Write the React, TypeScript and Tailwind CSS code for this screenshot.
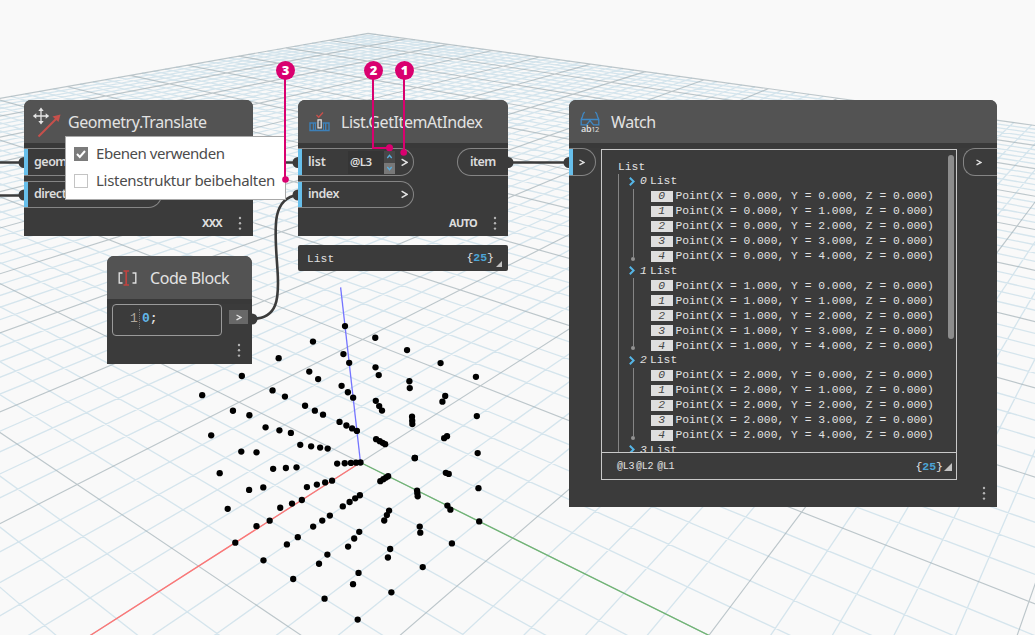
import type { ReactNode } from "react";

/* ---------- 3D background ---------- */

const project = (x: number, y: number, z = 0): [number, number] => {
  const w = 1 - 0.02986 * x - 0.02247 * y - 0.02388 * z;
  return [
    (360.5 - 38.33 * x + 18.91 * y - 12.11 * z) / w,
    (462.5 + 3.83 * x + 3.01 * y - 41.9 * z) / w,
  ];
};

const EXTENT = 50;
const MIN_DEPTH = 0.2;

function linePath(fixed: number, alongX: boolean) {
  const other = alongX ? 0.02247 : 0.02986;
  const own = alongX ? 0.02986 : 0.02247;
  const limit = Math.min(EXTENT, (1 - MIN_DEPTH - other * fixed) / own);
  if (limit <= -EXTENT) return "";
  const [x1, y1] = alongX ? project(-EXTENT, fixed) : project(fixed, -EXTENT);
  const [x2, y2] = alongX ? project(limit, fixed) : project(fixed, limit);
  return `M${x1.toFixed(2)} ${y1.toFixed(2)}L${x2.toFixed(2)} ${y2.toFixed(2)}`;
}

let minor = "";
let major = "";
for (let i = -EXTENT; i <= EXTENT; i++) {
  const d = linePath(i, true) + linePath(i, false);
  if (i % 5 === 0) major += d;
  else minor += d;
}

const range = [0, 1, 2, 3, 4];
const points = range.flatMap((x) => range.flatMap((y) => range.map((z) => project(x, y, z))));

function Scene() {
  const o = project(0, 0);
  const rx = project(16, 0);
  const gy = project(0, 16);
  const bz = project(0, 0, 5);
  return (
    <svg className="absolute inset-0" width="1035" height="635" viewBox="0 0 1035 635" fill="none">
      <path d={minor} stroke="#bcd7e4" strokeOpacity="0.6" strokeWidth="1.300" />
      <path d={major} stroke="#a3b0b7" strokeOpacity="0.7" strokeWidth="1.150" />
      <path d={`M${o}L${rx}`} stroke="#ff7575" strokeWidth="1.3" />
      <path d={`M${o}L${gy}`} stroke="#6fb573" strokeWidth="1.3" />
      <path d={`M${o}L${bz}`} stroke="#7474ff" strokeWidth="1.3" />
      {points.map(([x, y], i) => (
        <circle key={i} cx={x} cy={y} r="3.150" fill="#000" />
      ))}
      <g stroke="#3b3b3b" strokeWidth="2.6">
        <path d="M0 162.500H24M0 195.500H24M252 162.500H298M508 162.500H569" />
        <path d="M253 318.800C277 318.500 279.500 300 277.500 270C275 232 270 198 298 195" />
      </g>
      <g fill="#3b3b3b">
        <path d="M24 157a5.500 5.500 0 0 0 0 11zM24 189.500a5.500 5.500 0 0 0 0 11zM298 157a5.500 5.500 0 0 0 0 11zM298 189.500a5.500 5.500 0 0 0 0 11zM569 157a5.500 5.500 0 0 0 0 11z" />
        <path d="M508 157a5.500 5.500 0 0 1 0 11zM252 313.500a5.500 5.500 0 0 1 0 11z" />
      </g>
    </svg>
  );
}

/* ---------- node parts ---------- */

function Node({ className, title, icon, children }: { className: string; title: ReactNode; icon: ReactNode; children: ReactNode }) {
  return (
    <section className={`absolute flex flex-col overflow-hidden rounded-t-[7px] bg-[#3b3b3b] ${className}`}>
      <header className="flex h-[43px] shrink-0 items-center bg-[#535353] text-[16px] tracking-[-0.420px] text-[#e2e2e2]">
        {icon}
        {title}
      </header>
      <div className="h-[5px] shrink-0 bg-[#393939]" />
      {children}
    </section>
  );
}

function InPort({ className, children }: { className: string; children: ReactNode }) {
  return (
    <div className={`flex items-center rounded-r-[14px] border border-l-0 border-[#858585] text-[12.500px] font-semibold tracking-[-0.500px] text-[#dcdcdc] ${className}`}>
      <i className="mr-[6px] w-[4px] shrink-0 self-stretch bg-[#67bfeb]" />
      {children}
    </div>
  );
}

function Chevron({ className = "" }: { className?: string }) {
  return (
    <svg className={className} width="7" height="9" viewBox="0 0 7 9" fill="none" stroke="#e2e2e2" strokeWidth="1.500">
      <path d="M.6 1.200 6 4.400.6 7.600" />
    </svg>
  );
}

function SmallChevron({ className = "" }: { className?: string }) {
  return (
    <svg className={className} width="6" height="7" viewBox="0 0 6 7" fill="none" stroke="#e2e2e2" strokeWidth="1.400">
      <path d="M.5 1 5 3.400.5 5.800" />
    </svg>
  );
}

function Dots() {
  return (
    <svg width="4" height="15" viewBox="0 0 4 15" fill="#b5b5b5">
      <circle cx="2" cy="2" r="1.200" />
      <circle cx="2" cy="7.300" r="1.200" />
      <circle cx="2" cy="12.600" r="1.200" />
    </svg>
  );
}

function NodeFooter({ children }: { children: ReactNode }) {
  return (
    <div className="flex flex-1 items-center justify-end gap-[16px] pr-[11px] pt-[2px] text-[11px] font-bold tracking-[-0.700px] text-[#dedede]">
      {children}
      <Dots />
    </div>
  );
}

function TranslateIcon() {
  return (
    <svg className="ml-[8px] mr-[6px]" width="30" height="32" viewBox="0 0 30 32" fill="none">
      <path d="M6.500 30.500 25 12" stroke="#c6504b" strokeWidth="2" />
      <path d="M28.500 8.500 26.500 16 20.500 10.500z" fill="#c6504b" />
      <path d="M9 4v12M3 10h12" stroke="#e4e4e4" strokeWidth="1.300" />
      <path d="M9 1.500 11.700 5H6.300zM9 18.500l2.700-3.500H6.300zM.8 10l3.500-2.700v5.400zM17.200 10l-3.500-2.700v5.400z" fill="#e4e4e4" />
    </svg>
  );
}

function ListIcon() {
  return (
    <svg className="ml-[11px] mr-[11px]" width="21" height="21" viewBox="0 0 21 21" fill="none">
      <path d="M1 12h19v7.500H1zM4.500 12v7.500M16.700 12v7.500" stroke="#3d80b8" strokeWidth="1.400" />
      <path d="M6.500 12v7.500M14.500 12v7.500" stroke="#3d80b8" />
      <path d="M7.300 11.200h6.400v6.500H7.300z" fill="#535353" />
      <path d="M9 8.800h3.200v8H9z" stroke="#e4e4e4" strokeWidth="1.200" />
      <path d="M7.500 4 9.700 6.200 14 1.500" stroke="#c6504b" strokeWidth="1.400" />
    </svg>
  );
}

function CodeIcon() {
  return (
    <svg className="ml-[10px] mr-[12px]" width="21" height="18" viewBox="0 0 21 18" fill="none">
      <path d="M5.500 4H2.200v10h3.300M15.500 4h3.300v10h-3.300" stroke="#dedede" strokeWidth="1.400" />
      <path d="M6.500 2H12M6.500 16H12M9.200 2v14" stroke="#c04340" strokeWidth="1.700" />
    </svg>
  );
}

function WatchIcon() {
  return (
    <span className="ml-[11px] mr-[11px] flex w-[20px] flex-col items-center">
      <svg width="20" height="16" viewBox="0 0 20 16" fill="none" stroke="#3f88c5" strokeWidth="1.300">
        <path d="M4.800 1.200C3 2 3 3 2.500 5.500L1.200 8.500v5.300h5.300L10 9.500l3.500 4.300h5.300V8.500l-1.300-3C17 3 17 2 15.200 1.200M1.200 8.500h17.600" />
      </svg>
      <span className="mt-[-2px] flex items-end text-[9px] leading-[8px] font-semibold text-[#dedede]">
        ab<span className="text-[7.500px] leading-[7px] font-normal">12</span>
      </span>
    </span>
  );
}

/* ---------- watch tree ---------- */

const MONO = "font-['Liberation_Mono',monospace]";

function BranchTitle({ index }: { index: number }) {
  return (
    <div className="flex h-[14.500px] items-center">
      <svg className="mr-[5px]" width="6" height="9" viewBox="0 0 6 9" fill="none" stroke="#55b5e6" strokeWidth="2">
        <path d="M.8.800 4.600 4.500.8 8.200" />
      </svg>
      <i className="w-[10px]">{index}</i>
      List
    </div>
  );
}

function Branch({ index }: { index: number }) {
  return (
    <div className="flex h-[89.500px] flex-col">
      <BranchTitle index={index} />
      <div className="flex">
        <div className="ml-[2px] flex w-[4px] flex-col items-center pb-[5px]">
          <i className="w-px flex-1 bg-[#858585]" />
          <i className="mb-[-2px] size-[4px] rounded-full bg-[#929292]" />
        </div>
        <div className="ml-[16px]">
          {range.map((n) => (
            <div key={n} className="flex h-[15px] items-center">
              <i className="mr-[3px] flex h-[11px] w-[21.500px] items-center justify-center bg-[#dedede] text-[#444]">{n}</i>
              <span className="whitespace-pre">{`Point(X = ${index}.000, Y = ${n}.000, Z = 0.000)`}</span>
            </div>
          ))}
        </div>
      </div>
    </div>
  );
}

function Count() {
  return (
    <span className="text-[11.500px]">
      {"{"}
      <b className="font-bold text-[#4ba4d6]">25</b>
      {"}"}
    </span>
  );
}

function Corner({ className = "" }: { className?: string }) {
  return (
    <svg className={className} width="8" height="8" viewBox="0 0 8 8">
      <path d="M8 0v8H0z" fill="#c2c2c2" />
    </svg>
  );
}

/* ---------- callouts ---------- */

function Badge({ className, children }: { className: string; children: ReactNode }) {
  return (
    <span className={`absolute top-[61px] flex size-[19px] items-center justify-center rounded-full bg-[#d9006f] font-['Open_Sans',sans-serif] text-[13px] font-extrabold text-white ${className}`}>
      {children}
    </span>
  );
}

export default function App() {
  return (
    <main className="relative h-[635px] w-[1035px] overflow-hidden bg-[#f9f9f9] font-['Noto_Sans',sans-serif]">
      <Scene />

      <Node className="left-[24px] top-[100px] h-[136px] w-[229px]" title="Geometry.Translate" icon={<TranslateIcon />}>
        <InPort className="h-[28px] w-[138px]">geometry</InPort>
        <InPort className="mt-[5px] h-[27px] w-[138px]">direction</InPort>
        <NodeFooter>XXX</NodeFooter>
      </Node>

      <Node className="left-[298px] top-[100px] h-[136px] w-[210px]" title="List.GetItemAtIndex" icon={<ListIcon />}>
        <div className="flex justify-between">
          <InPort className="h-[28px] w-[116px]">
            <span className="w-[40px] tracking-[-0.200px]">list</span>
            <span className="flex h-[23px] w-[36px] items-center bg-[#353535] pl-[2px] text-[11.500px]">@L3</span>
            <span className="flex h-[23px] w-[11px] flex-col bg-[#484848]">
              <svg width="11" height="12" viewBox="0 0 11 12" fill="none" stroke="#58aede" strokeWidth="1.300">
                <path d="M3.300 7 5.500 4.300 7.700 7" />
              </svg>
              <svg className="bg-[#787878]" width="11" height="11" viewBox="0 0 11 11" fill="none" stroke="#58aede" strokeWidth="1.300">
                <path d="M3.300 4 5.500 6.700 7.700 4" />
              </svg>
            </span>
            <Chevron className="ml-[6px]" />
          </InPort>
          <div className="flex h-[28px] w-[51px] items-center rounded-l-[14px] border border-r-0 border-[#858585] pl-[12px] text-[12.500px] font-semibold tracking-[-0.600px] text-[#dcdcdc]">
            item
          </div>
        </div>
        <InPort className="mt-[5px] h-[27px] w-[116px]">
          <span className="w-[93px]">index</span>
          <Chevron />
        </InPort>
        <NodeFooter>AUTO</NodeFooter>
      </Node>

      <div className={`absolute left-[298px] top-[245px] flex h-[26px] w-[210px] items-center rounded-[2px] bg-[#3b3b3b] pl-[9px] text-[11.330px] text-[#e0e0e0] ${MONO}`}>
        <span className="flex-1 pt-[3px]">List</span>
        <Count />
        <Corner className="ml-[2px] mr-[6px] mt-[11px] size-[6px]" />
      </div>

      <Node className="left-[107px] top-[256px] h-[108px] w-[145px]" title="Code Block" icon={<CodeIcon />}>
        <div className="flex items-start pl-[5px]">
          <div className={`flex h-[32px] w-[110px] items-center rounded-[4px] border border-[#9a9a9a] pb-[3px] pl-[17px] text-[13px] ${MONO}`}>
            <span className="w-[9px] text-[#b0a89e]">1</span>
            <i className="mr-[2px] h-[20px] border-l border-dotted border-[#777]" />
            <b className="text-[#62b8ea]">0</b>
            <b className="text-[#dedede]">;</b>
          </div>
          <div className="ml-[7px] mt-[6px] flex h-[14px] w-[19px] items-center justify-center bg-[#686868]">
            <SmallChevron />
          </div>
        </div>
        <div className="flex flex-1 items-center justify-end pr-[11px]">
          <Dots />
        </div>
      </Node>

      <Node className="left-[569px] top-[100px] h-[407px] w-[428px]" title="Watch" icon={<WatchIcon />}>
        <div className="flex flex-1 items-start">
          <InPort className="h-[28px] w-[27px]">
            <SmallChevron className="shrink-0" />
          </InPort>
          <div className={`ml-[5px] mt-px flex h-[331px] w-[356px] flex-col border border-[#c9c9c9] text-[11.330px] leading-[14px] text-[#e2e2e2] ${MONO}`}>
            <div className="flex h-[302px] overflow-hidden pl-[16px] pt-[10px]">
              <div className="w-[330px]">
                <div className="h-[14px]">List</div>
                <div className="border-l border-[#858585] pl-[10px]">
                  <Branch index={0} />
                  <Branch index={1} />
                  <Branch index={2} />
                  <BranchTitle index={3} />
                </div>
              </div>
              <div className="mt-[-5px] h-[184px] w-[6px] shrink-0 rounded-full bg-[#8d8d8d]" />
            </div>
            <div className="flex flex-1 items-center border-t border-[#c9c9c9] pl-[15px] pr-[4px] pt-[2px] text-[10px]">
              <span className="flex flex-1 gap-[2px] tracking-[-0.300px]">
                <span>@L3</span>
                <span>@L2</span>
                <span className="pl-[2px]">@L1</span>
              </span>
              <Count />
              <Corner className="ml-[1px]" />
            </div>
          </div>
          <div className="ml-[6px] flex h-[28px] flex-1 items-center rounded-l-[12px] border border-r-0 border-[#858585] pl-[12px]">
            <SmallChevron />
          </div>
        </div>
        <div className="absolute bottom-[6px] right-[11px]">
          <Dots />
        </div>
      </Node>

      <div className="absolute left-[65px] top-[136px] flex h-[64px] w-[221px] flex-col justify-center gap-[4px] border border-[#a8a8a8] bg-white pb-[2px] pl-[8px] text-[15px] tracking-[-0.300px] text-[#4c4c4c]">
        <label className="flex h-[23px] items-center gap-[8px] tracking-[-0.450px]">
          <svg width="14" height="14" viewBox="0 0 14 14">
            <path d="M0 0h14v14H0z" fill="#7b7b7b" />
            <path d="m3 7 2.800 3L11 4" fill="none" stroke="#fff" strokeWidth="2" />
          </svg>
          Ebenen verwenden
        </label>
        <label className="flex h-[23px] items-center gap-[8px]">
          <span className="size-[14px] border border-[#c4c4c4]" />
          Listenstruktur beibehalten
        </label>
      </div>

      <svg className="absolute inset-0" width="1035" height="635" viewBox="0 0 1035 635">
        <path d="M285 75V180M373 75V148H389M404 75V152" fill="none" stroke="#d9006f" strokeWidth="2" />
        <g fill="#d9006f">
          <circle cx="285.500" cy="179.500" r="3.300" />
          <circle cx="389.500" cy="147.800" r="3.500" />
          <circle cx="403.700" cy="152.500" r="3.300" />
        </g>
      </svg>
      <Badge className="left-[276px]">3</Badge>
      <Badge className="left-[364px]">2</Badge>
      <Badge className="left-[395px]">1</Badge>
    </main>
  );
}
